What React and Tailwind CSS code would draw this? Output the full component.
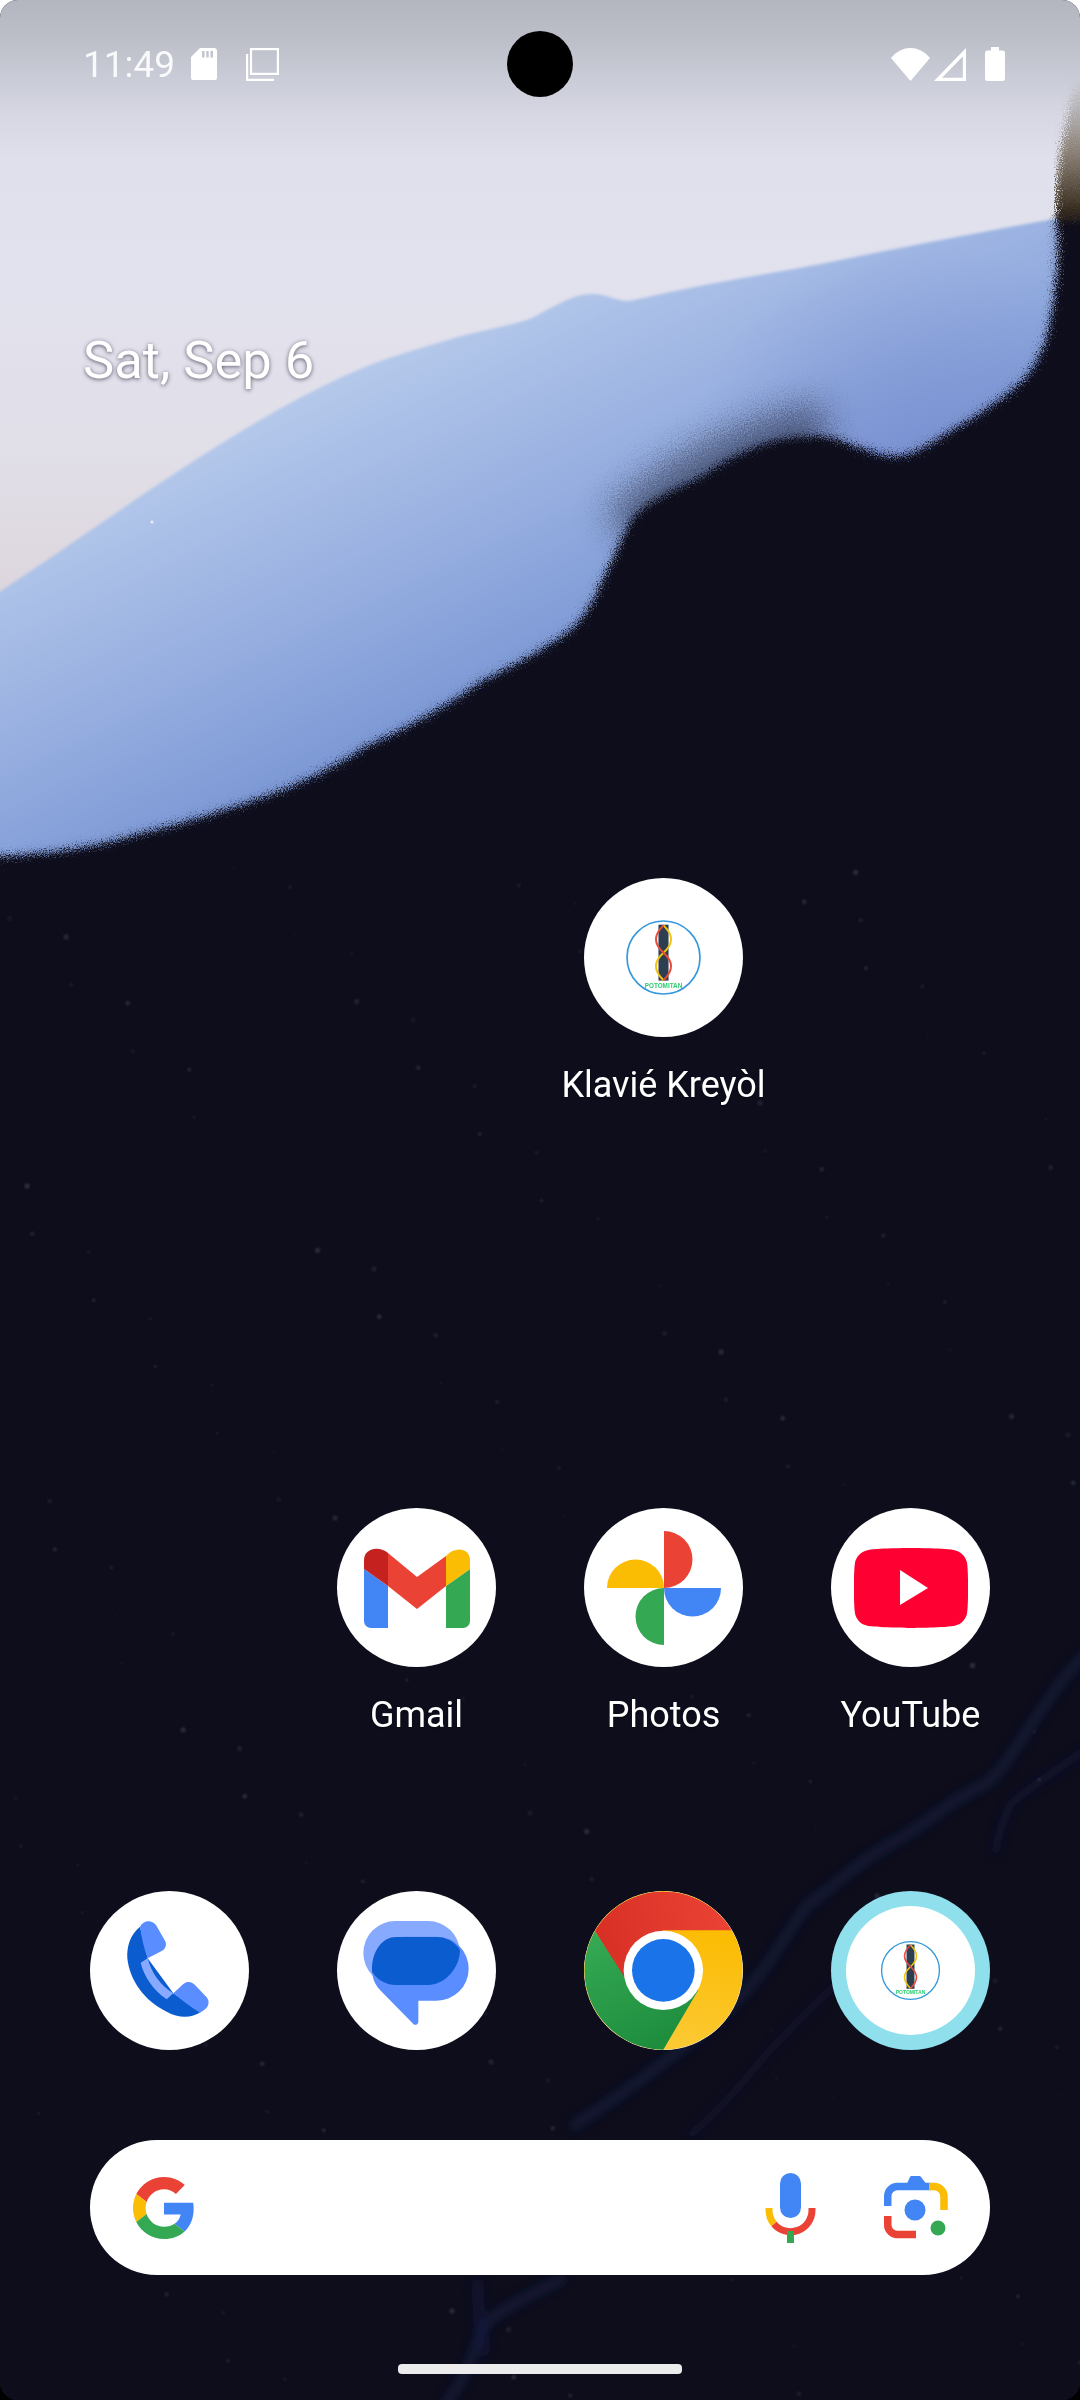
import React from 'react';

const font = { fontFamily: 'Roboto, "Noto Sans", sans-serif' };

// faint dust on the dark part of the wallpaper
const specks = Array.from({ length: 190 }, (_, i) => ({
  x: (i * 397.3 + 61) % 1080,
  y: 860 + ((i * 761.7 + 29) % 1540),
  r: 1 + ((i * 7) % 5) * 0.4,
  o: 0.08 + ((i * 13) % 7) * 0.03,
}));

const darkEdge =
  'M1057 216 C1060 250 1059 290 1047 340 C1036 368 1026 380 1012 391 C990 408 970 422 950 432 C930 446 912 457 895 457 C880 457 868 450 854 447 C840 440 826 437 813 437 C795 437 776 440 758 447 C735 456 718 466 702 477 C680 488 650 500 634 518 C622 538 616 556 606 574 C596 600 586 616 572 630 C545 650 515 666 482 682 C440 712 400 732 365 748 C335 768 305 782 275 794 C230 810 185 824 138 835 C95 848 50 856 -20 858 L-20 2420 L1100 2420 L1100 216 Z';

function Wallpaper() {
  return (
    <svg className="absolute inset-0" width="1080" height="2400" viewBox="0 0 1080 2400">
      <defs>
        <linearGradient id="pale" x1="0" y1="0" x2="0" y2="640" gradientUnits="userSpaceOnUse">
          <stop offset="0" stopColor="#b4b6bf" />
          <stop offset="0.06" stopColor="#bcbec8" />
          <stop offset="0.12" stopColor="#c9cbd6" />
          <stop offset="0.18" stopColor="#d6d7e3" />
          <stop offset="0.25" stopColor="#dfe0ec" />
          <stop offset="0.42" stopColor="#e2e2ee" />
          <stop offset="0.7" stopColor="#e1dfe8" />
          <stop offset="1" stopColor="#dcd3da" />
        </linearGradient>
        <linearGradient id="blue" x1="300" y1="400" x2="485" y2="787" gradientUnits="userSpaceOnUse">
          <stop offset="0" stopColor="#b4c8ea" />
          <stop offset="0.45" stopColor="#96aee0" />
          <stop offset="1" stopColor="#6e8ccf" />
        </linearGradient>
        <radialGradient id="bump" cx="920" cy="470" r="230" gradientUnits="userSpaceOnUse">
          <stop offset="0" stopColor="#7389cd" stopOpacity="0.6" />
          <stop offset="1" stopColor="#7389cd" stopOpacity="0" />
        </radialGradient>
        <linearGradient id="burn" x1="0" y1="80" x2="0" y2="235" gradientUnits="userSpaceOnUse">
          <stop offset="0" stopColor="#5a4c34" stopOpacity="0" />
          <stop offset="0.5" stopColor="#54432a" stopOpacity="0.65" />
          <stop offset="0.85" stopColor="#33291c" />
          <stop offset="1" stopColor="#0f0e1a" />
        </linearGradient>
        <filter id="soft" x="-5%" y="-5%" width="110%" height="110%">
          <feGaussianBlur stdDeviation="1.6" />
        </filter>
        <filter id="grit" x="-5%" y="-5%" width="110%" height="110%">
          <feGaussianBlur stdDeviation="2.5" result="b" />
          <feTurbulence type="fractalNoise" baseFrequency="0.85" numOctaves="2" seed="4" result="n" />
          <feDisplacementMap in="b" in2="n" scale="22" xChannelSelector="R" yChannelSelector="G" />
        </filter>
        <filter id="fuzz" x="-5%" y="-5%" width="110%" height="110%">
          <feGaussianBlur stdDeviation="4" result="b" />
          <feTurbulence type="fractalNoise" baseFrequency="0.8" numOctaves="2" seed="12" result="n" />
          <feDisplacementMap in="b" in2="n" scale="30" xChannelSelector="R" yChannelSelector="G" />
        </filter>
        <filter id="haze" x="-30%" y="-60%" width="160%" height="220%">
          <feGaussianBlur stdDeviation="16" result="b" />
          <feTurbulence type="fractalNoise" baseFrequency="0.7" numOctaves="2" seed="9" result="n" />
          <feDisplacementMap in="b" in2="n" scale="46" xChannelSelector="R" yChannelSelector="G" />
        </filter>
        <filter id="streak" x="-10%" y="-10%" width="120%" height="120%">
          <feGaussianBlur stdDeviation="4" />
        </filter>
        <filter id="dust" x="0" y="0" width="100%" height="100%">
          <feGaussianBlur stdDeviation="0.8" />
        </filter>
      </defs>

      <rect width="1080" height="900" fill="url(#pale)" />
      <path
        filter="url(#soft)"
        d="M-10 598 C110 520 240 420 358 370 C388 357 418 349 448 340 C478 331 505 327 530 319 C552 308 572 294 592 294 C610 294 620 304 634 300 C700 284 770 274 826 263 C900 248 980 232 1060 218 L1070 900 L-10 900 Z"
        fill="url(#blue)"
      />
      <rect x="690" y="240" width="390" height="460" fill="url(#bump)" />
      <path d="M622 530 C660 490 720 450 825 425" fill="none" stroke="#24263a" strokeWidth="44" opacity="0.6" filter="url(#haze)" />

      <path filter="url(#fuzz)" d={darkEdge} fill="#0f0e1a" opacity="0.4" />
      <path filter="url(#grit)" d={darkEdge} fill="#0f0e1a" />
      <path filter="url(#grit)" d="M1076 80 C1066 120 1054 170 1056 222 L1090 222 L1090 80 Z" fill="url(#burn)" />

      <g filter="url(#streak)" fill="none" stroke="#18224f" strokeLinecap="round">
        <path d="M1085 1655 C1040 1700 1015 1760 986 1784 C950 1800 925 1825 897 1840 C860 1860 835 1885 807 1906 C785 1935 770 1965 748 1988 C715 2025 680 2050 648 2074 C625 2092 605 2105 575 2125" strokeWidth="12" opacity="0.42" />
        <path d="M1085 1750 C1050 1775 1025 1790 1011 1804 C1003 1820 998 1835 996 1850" strokeWidth="8" opacity="0.35" />
        <path d="M880 1950 C840 1975 800 2020 770 2050 C745 2080 720 2110 690 2135" strokeWidth="7" opacity="0.28" />
        <path d="M560 2280 C520 2300 490 2315 482 2330 C475 2350 468 2375 445 2405" strokeWidth="12" opacity="0.42" />
        <path d="M478 2285 C478 2310 480 2330 484 2350" strokeWidth="12" opacity="0.36" />
      </g>

      <g filter="url(#dust)">
        {specks.map((s, i) => (
          <circle key={i} cx={s.x} cy={s.y} r={s.r} fill="#8a8fa5" opacity={s.o} />
        ))}
      </g>
      <circle cx="152" cy="522" r="1.6" fill="#e8edf8" />
    </svg>
  );
}

function SdCard() {
  return (
    <svg width="26" height="32" viewBox="0 0 26 32" fill="#fff">
      <path
        fillRule="evenodd"
        d="M9 0H23a3 3 0 0 1 3 3V30a2 2 0 0 1-2 2H2a2 2 0 0 1-2-2V9ZM11 3V9.500H13.500V3ZM15.300 3V9.500H17.700V3ZM19.500 3V9.500H22V3Z"
      />
    </svg>
  );
}

function CopyGlyph() {
  return (
    <svg width="33" height="33" viewBox="0 0 33 33" fill="none" stroke="#fff" strokeWidth="2.2">
      <rect x="5" y="1.100" width="26.900" height="24.800" />
      <path d="M1.100 6V31.900H28" />
    </svg>
  );
}

function Wifi() {
  return (
    <svg width="39" height="33" viewBox="0 0 39 33" fill="#fff">
      <path d="M0 10C11-3.300 28-3.300 39 10L19.500 33Z" />
    </svg>
  );
}

function Signal() {
  return (
    <svg width="32" height="33" viewBox="0 0 32 33" fill="#fff">
      <path fillRule="evenodd" d="M32 0V33H0ZM28.800 8.500 8 29.800H28.800Z" />
    </svg>
  );
}

function Battery() {
  return (
    <svg width="20" height="34" viewBox="0 0 20 34" fill="#fff">
      <path d="M6 0H14V3.500H17.500A2.500 2.500 0 0 1 20 6V31.500A2.500 2.500 0 0 1 17.500 34H2.500A2.500 2.500 0 0 1 0 31.500V6A2.500 2.500 0 0 1 2.500 3.500H6Z" />
    </svg>
  );
}

function Potomitan({ size }) {
  return (
    <svg width={size} height={size} viewBox="255 177 230 230">
      <circle cx="370" cy="292" r="109" fill="none" stroke="#3498db" strokeWidth="5" />
      <rect x="355" y="194" width="30" height="167" fill="#2c3e50" />
      <path d="M370 196C400 225 400 250 370 278C340 305 340 330 370 360" fill="none" stroke="#f1c40f" strokeWidth="6" />
      <path d="M370 196C340 225 340 250 370 278C400 305 400 330 370 360" fill="none" stroke="#e74c3c" strokeWidth="6" />
      <text x="370" y="382" textAnchor="middle" fontSize="19" fontWeight="700" fontFamily="Liberation Sans, sans-serif" fill="#2ecc71">
        POTOMITAN
      </text>
    </svg>
  );
}

function Gmail() {
  return (
    <svg width="106" height="80" viewBox="0 0 106 80">
      <path d="M0 21 24 38V80H7a7 7 0 0 1-7-7Z" fill="#4285f4" />
      <path d="M106 21 82 38V80H99a7 7 0 0 0 7-7Z" fill="#34a853" />
      <path d="M24 5 53 29 82 8V38L53 61 24 38Z" fill="#ea4335" />
      <path d="M0 12C0 1 14-3 24 5V38L0 21Z" fill="#c5221f" />
      <path d="M82 8C92-3 106 1 106 12V21L82 38Z" fill="#fbbc04" />
    </svg>
  );
}

function Photos() {
  return (
    <svg width="116" height="116" viewBox="-58 -58 116 116">
      <path d="M0-57A28.500 28.500 0 0 1 0 0Z" fill="#ea4335" />
      <path d="M-57 0A28.500 28.500 0 0 1 0 0Z" fill="#fbbc04" />
      <path d="M0 57A28.500 28.500 0 0 1 0 0Z" fill="#34a853" />
      <path d="M57 0A28.500 28.500 0 0 1 0 0Z" fill="#4285f4" />
    </svg>
  );
}

function YouTube() {
  return (
    <svg width="114" height="80" viewBox="0 0 114 80">
      <path
        d="M57 0C57 0 21 0 12.500 2.400C6.500 4 2.400 8.500 1 14.500C-0.300 23 0 40 0 40C0 40-0.300 57 1 65.500C2.400 71.500 6.500 76 12.500 77.600C21 80 57 80 57 80C57 80 93 80 101.500 77.600C107.500 76 111.600 71.500 113 65.500C114.300 57 114 40 114 40C114 40 114.300 23 113 14.500C111.600 8.500 107.500 4 101.500 2.400C93 0 57 0 57 0Z"
        fill="#ff0033"
      />
      <path d="M46 22 74 40 46 57Z" fill="#fff" />
    </svg>
  );
}

function Phone() {
  return (
    <svg width="159" height="159" viewBox="60 63 477 477">
      <path d="M210 170C180 195 170 230 172 265C178 330 225 395 290 425C325 445 365 445 392 426L310 370L233 265Z" fill="#0b5ccf" />
      <path d="M210 170C220 150 245 148 258 165L285 212C292 225 285 238 275 243L233 265C222 235 214 200 210 170Z" fill="#5a8dff" />
      <path d="M310 370 340 342C352 332 365 335 375 345L410 382C420 395 416 410 405 418C400 423 395 425 390 428C360 410 335 390 310 370Z" fill="#5a8dff" />
      <path d="M212 278 233 265C245 310 270 345 310 370L290 388C250 360 222 320 212 278Z" fill="#87aaff" />
    </svg>
  );
}

function Messages() {
  return (
    <svg width="159" height="159" viewBox="801 63 477 477">
      <rect x="880" y="153" width="290" height="192" rx="96" fill="#87aaff" />
      <path d="M1002 200H1100A96 96 0 0 1 1100 392H1045V455C1045 465 1033 468 1028 460L930 360C912 340 906 320 906 296A96 96 0 0 1 1002 200Z" fill="#5a8dff" />
      <path d="M978 201H1098C1128 201 1155 215 1170 240C1168 300 1120 345 1074 345H978C950 345 922 330 906 305V296C906 240 940 201 978 201Z" fill="#0b5ccf" />
    </svg>
  );
}

function Chrome() {
  return (
    <svg width="159" height="159" viewBox="42 63 477 477">
      <defs>
        <linearGradient id="cr" x1="90" y1="200" x2="470" y2="120" gradientUnits="userSpaceOnUse">
          <stop offset="0" stopColor="#d93025" />
          <stop offset="1" stopColor="#ea4335" />
        </linearGradient>
        <linearGradient id="cg" x1="100" y1="200" x2="240" y2="530" gradientUnits="userSpaceOnUse">
          <stop offset="0" stopColor="#34a853" />
          <stop offset="1" stopColor="#1e8e3e" />
        </linearGradient>
        <linearGradient id="cy" x1="430" y1="200" x2="340" y2="530" gradientUnits="userSpaceOnUse">
          <stop offset="0" stopColor="#fbbc04" />
          <stop offset="1" stopColor="#fcc934" />
        </linearGradient>
      </defs>
      <circle cx="280" cy="301" r="238" fill="url(#cy)" />
      <path d="M485 181A238 238 0 0 0 75 183L175 350 280 181Z" fill="url(#cr)" />
      <path d="M75 183A238 238 0 0 0 280 539L385 360 175 340Z" fill="url(#cg)" />
      <circle cx="280" cy="301" r="119" fill="#fff" />
      <circle cx="280" cy="301" r="94" fill="#1a73e8" />
    </svg>
  );
}

function GoogleG() {
  return (
    <svg width="62" height="62" viewBox="0 0 48 48">
      <path fill="#EA4335" d="M24 9.500c3.540 0 6.710 1.220 9.210 3.600l6.850-6.850C35.900 2.380 30.470 0 24 0 14.620 0 6.510 5.380 2.560 13.220l7.980 6.190C12.430 13.720 17.740 9.500 24 9.500z" />
      <path fill="#4285F4" d="M46.980 24.550c0-1.570-.15-3.090-.38-4.550H24v9.020h12.940c-.58 2.960-2.260 5.480-4.780 7.180l7.730 6c4.510-4.180 7.090-10.360 7.090-17.650z" />
      <path fill="#FBBC05" d="M10.530 28.590c-.48-1.450-.76-2.990-.76-4.590s.27-3.140.76-4.590l-7.980-6.190C.92 16.460 0 20.120 0 24c0 3.880.92 7.540 2.560 10.780l7.970-6.190z" />
      <path fill="#34A853" d="M24 48c6.480 0 11.930-2.130 15.890-5.810l-7.730-6c-2.150 1.450-4.920 2.300-8.160 2.300-6.260 0-11.570-4.220-13.470-9.910l-7.980 6.190C6.510 42.620 14.620 48 24 48z" />
    </svg>
  );
}

function Mic() {
  return (
    <svg width="60" height="76" viewBox="0 0 60 76" fill="none">
      <rect x="20" y="3" width="21" height="45" rx="10.500" fill="#4285f4" />
      <path d="M9 38V40A21.500 21.500 0 0 0 14 54" stroke="#fbbc04" strokeWidth="7" />
      <path d="M14 54A21.500 21.500 0 0 0 52 40V38" stroke="#ea4335" strokeWidth="7" />
      <rect x="27" y="61" width="7" height="12" fill="#34a853" />
    </svg>
  );
}

function Lens() {
  return (
    <svg width="65" height="65" viewBox="0 0 65 65" fill="none">
      <path d="M3.750 31V21A9.500 9.500 0 0 1 13.250 11.500H47" stroke="#4285f4" strokeWidth="7.500" />
      <path d="M20 15 26 2C26.500 1 27 1 28 1H35C36 1 36.500 1 37 2L47 15Z" fill="#4285f4" />
      <path d="M45 11.500H50A10 10 0 0 1 60 21.500V35" stroke="#fbbc04" strokeWidth="7.500" />
      <path d="M3.750 41V50A9.500 9.500 0 0 0 13.250 59.500H32" stroke="#ea4335" strokeWidth="7.500" />
      <circle cx="31" cy="35" r="10.500" fill="#4285f4" />
      <circle cx="54" cy="53" r="7.500" fill="#34a853" />
    </svg>
  );
}

function AppIcon({ label, children, ring }) {
  return (
    <div className="flex flex-col items-center">
      <div className={`w-[159px] h-[159px] rounded-full flex items-center justify-center overflow-hidden ${ring ? 'bg-[#8fe0ec]' : 'bg-white'}`}>
        {children}
      </div>
      {label && (
        <span className="mt-[24px] text-[36px] leading-[48px] text-white whitespace-nowrap [text-shadow:0_1px_2px_rgba(0,0,0,0.4)]">
          {label}
        </span>
      )}
    </div>
  );
}

export default function App() {
  return (
    <div className="w-[1080px] h-[2400px] bg-[linear-gradient(#fff_50%,#000_50%)]" style={font}>
      <div className="relative w-full h-full rounded-[18px] overflow-hidden bg-[#0f0e1a]">
        <Wallpaper />

        {/* camera cutout */}
        <div className="absolute left-[507px] top-[31px] w-[66px] h-[66px] rounded-full bg-black z-20" />

        <div className="relative z-10 flex flex-col h-full">
          {/* Status bar */}
          <div className="flex items-center justify-between h-[128px] pl-[83px] pr-[75px]">
            <div className="flex items-center">
              <span className="text-[37px] leading-none text-white/90 w-[108px]">11:49</span>
              <SdCard />
              <span className="ml-[29px]"><CopyGlyph /></span>
            </div>
            <div className="flex items-center gap-[4px]">
              <Wifi />
              <Signal />
              <span className="ml-[15px]"><Battery /></span>
            </div>
          </div>

          {/* Date */}
          <div className="pl-[83px] mt-[202px] text-[52.500px] leading-[60px] text-white [text-shadow:0_1px_4px_rgba(30,30,50,0.7)]">
            Sat, Sep 6
          </div>

          {/* Home grid */}
          <div className="grid grid-cols-4 px-[46px] mt-[488px]">
            <div className="col-start-3 whitespace-nowrap">
              <AppIcon label="Klavié Kreyòl"><Potomitan size={77} /></AppIcon>
            </div>
          </div>
          <div className="grid grid-cols-4 px-[46px] mt-[399px]">
            <div className="col-start-2"><AppIcon label="Gmail"><Gmail /></AppIcon></div>
            <AppIcon label="Photos"><Photos /></AppIcon>
            <AppIcon label="YouTube"><YouTube /></AppIcon>
          </div>

          {/* Dock */}
          <div className="grid grid-cols-4 px-[46px] mt-[152px]">
            <AppIcon><Phone /></AppIcon>
            <AppIcon><Messages /></AppIcon>
            <AppIcon><Chrome /></AppIcon>
            <AppIcon ring>
              <div className="w-[129px] h-[129px] rounded-full bg-white flex items-center justify-center">
                <Potomitan size={61} />
              </div>
            </AppIcon>
          </div>

          {/* Search bar */}
          <div className="mx-[90px] mt-[90px] h-[135px] rounded-[67px] bg-white flex items-center pl-[43px] pr-[41px]">
            <GoogleG />
            <div className="ml-auto flex items-center gap-[64px]">
              <Mic />
              <Lens />
            </div>
          </div>

          {/* Gesture handle */}
          <div className="mx-auto mt-[89px] w-[284px] h-[10px] rounded-[4px] bg-[#ececec]" />
        </div>
      </div>
    </div>
  );
}
